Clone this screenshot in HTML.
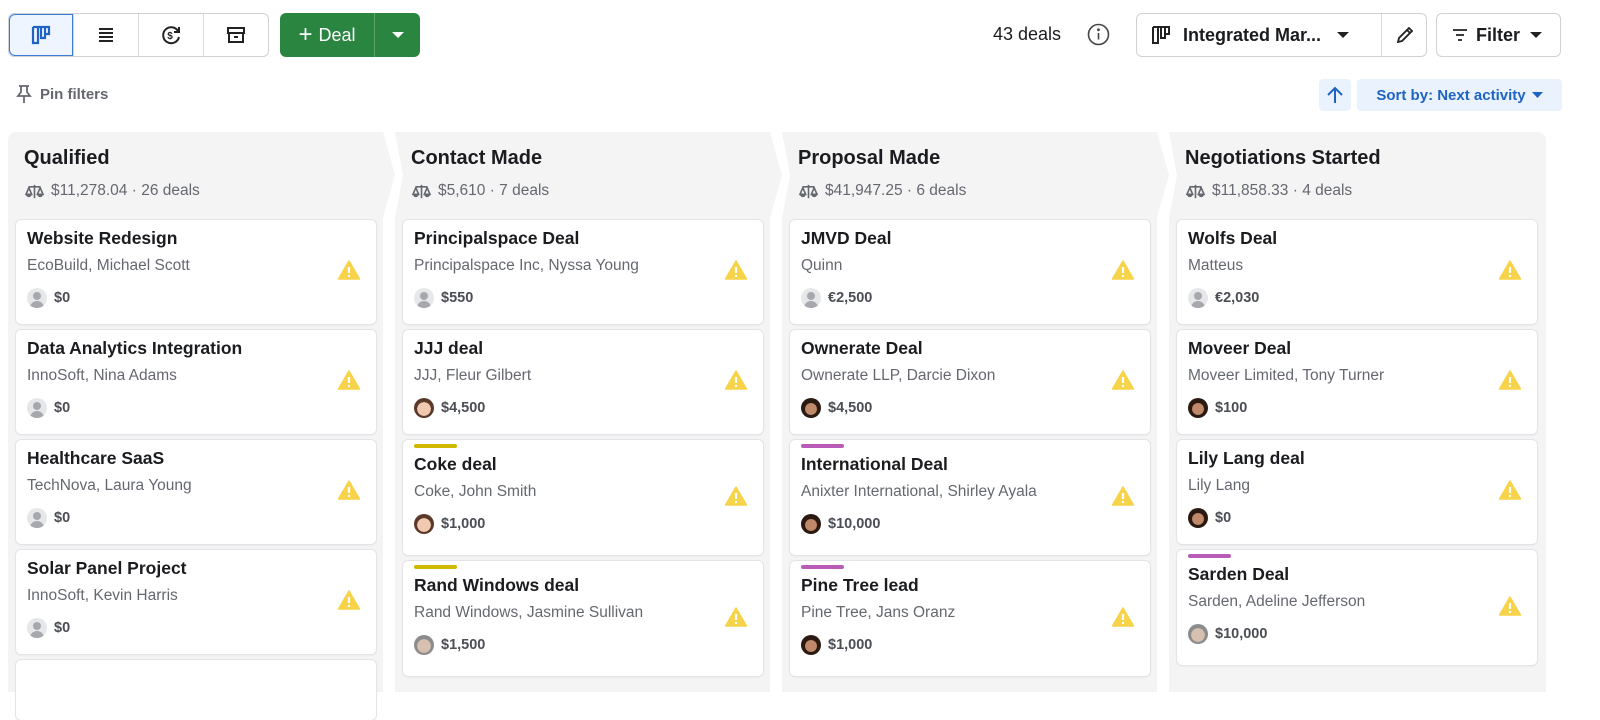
<!DOCTYPE html>
<html><head><meta charset="utf-8">
<style>
*{box-sizing:border-box;margin:0;padding:0}
body{width:1600px;height:675px;overflow:hidden;background:#fff;font-family:"Liberation Sans",Arial,sans-serif;color:#1b1c1f;position:relative}
.abs{position:absolute}
.seg{position:absolute;top:13px;left:8px;width:261px;height:44px;border:1px solid #cfd1d5;border-radius:6px;display:flex;overflow:hidden}
.seg div{flex:1;border-left:1px solid #d9dbde;display:flex;align-items:center;justify-content:center}
.seg div:first-child{border-left:none;background:#eef5fe;box-shadow:inset 0 0 0 1px #3b7bd4;border-radius:6px 0 0 6px}
.deal{position:absolute;left:280px;top:13px;width:140px;height:44px;background:#2a8541;border-radius:6px;color:#fff;display:flex}
.deal .m{width:95px;display:flex;align-items:center;justify-content:center;font-size:18px;gap:6px;border-right:1px solid #5ea670}
.deal .d{flex:1;display:flex;align-items:center;justify-content:center}
.btn{position:absolute;top:13px;height:44px;border:1px solid #cfd1d5;border-radius:6px;display:flex;align-items:center;font-size:18px;font-weight:600;white-space:nowrap}
.col{position:absolute;top:132px;height:560px;background:#f4f4f5}
.wrap{position:absolute;top:0;width:387px;height:675px}
.ch{position:absolute;left:16px;top:147px;font-size:20px;font-weight:600;color:#1b1c1f;white-space:nowrap}
.cs{position:absolute;left:16px;top:182px;font-size:15.5px;color:#65686f;display:flex;align-items:center;gap:6px;white-space:nowrap}
.card{position:absolute;left:8px;width:360px;background:#fff;border-radius:5px;box-shadow:0 0 0 1px #e3e4e7,0 1px 2px rgba(0,0,0,.08)}
.card .t{position:absolute;left:11px;font-size:17.5px;font-weight:600;color:#1b1c1f;white-space:nowrap}
.card .s{position:absolute;left:11px;font-size:15.5px;color:#65686f;white-space:nowrap}
.card .v{position:absolute;left:11px;font-size:14.5px;font-weight:600;color:#4b4e55;display:flex;align-items:center;gap:7px}
.card .w{position:absolute;left:322px}
.bar{position:absolute;left:11px;top:4px;width:43px;height:4px;border-radius:2px}
.av{width:20px;height:20px;border-radius:50%;display:inline-block;position:relative;overflow:hidden}
.av.g{background:#e6e7e9}
.av.g:before{content:"";position:absolute;left:6px;top:4px;width:8px;height:8px;border-radius:50%;background:#a6a8ad}
.av.g:after{content:"";position:absolute;left:3px;top:13px;width:14px;height:10px;border-radius:7px 7px 0 0;background:#a6a8ad}
.av.p1{background:radial-gradient(circle at 50% 55%,#f0c9b0 0 45%,#5a3a2a 47%)}
.av.p2{background:radial-gradient(circle at 50% 55%,#c08a6a 0 38%,#2b1a12 42%)}
.av.p3{background:radial-gradient(circle at 50% 55%,#d7c0b0 0 45%,#8c8c8c 47%)}
</style></head><body>

<div class="seg">
 <div><svg width="22" height="22" viewBox="0 0 22 22" fill="none" stroke="#1f63c4" stroke-width="2.2"><path d="M3 3h16v7h-4V3M8 3v16h-5V3M15 10v4h-4V3"/></svg></div>
 <div><svg width="20" height="20" viewBox="0 0 20 20" stroke="#222" stroke-width="2"><path d="M3 4h14M3 8h14M3 12h14M3 16h14"/></svg></div>
 <div><svg width="22" height="22" viewBox="0 0 22 22" fill="none" stroke="#222" stroke-width="2"><path d="M18 7A8 8 0 1 0 19 13"/><path d="M19 3v5h-5"/><text x="7.2" y="15" font-size="10" font-weight="700" fill="#222" stroke="none" font-family="Liberation Sans">$</text></svg></div>
 <div><svg width="22" height="22" viewBox="0 0 22 22" fill="none" stroke="#222" stroke-width="2"><rect x="3" y="4" width="16" height="5"/><path d="M4 9v9h14V9M9 13h4"/></svg></div>
</div>
<div class="deal"><div class="m"><span style="font-size:24px;line-height:1">+</span>Deal</div><div class="d"><svg width="12" height="8"><path d="M0 1h12L6 7z" fill="#fff"/></svg></div></div>

<div class="abs" style="left:16px;top:84px;display:flex;align-items:center;gap:8px;font-size:15px;font-weight:600;color:#65686f">
<svg width="16" height="20" viewBox="0 0 16 20" fill="none" stroke="#65686f" stroke-width="1.8"><path d="M3 2h10M5 2v6l-3 4h12l-3-4V2M8 12v7"/></svg>Pin filters</div>

<div class="abs" style="left:993px;top:24px;font-size:18px;color:#1b1c1f">43 deals</div>
<svg class="abs" style="left:1087px;top:23px" width="23" height="23" viewBox="0 0 23 23" fill="none" stroke="#444" stroke-width="1.6"><circle cx="11.5" cy="11.5" r="10"/><path d="M11.5 10v6.5"/><circle cx="11.5" cy="6.8" r=".6" fill="#444"/></svg>

<div class="btn" style="left:1136px;width:291px">
 <svg style="margin-left:13px" width="22" height="22" viewBox="0 0 22 22" fill="none" stroke="#222" stroke-width="2"><path d="M3 3h16v7h-4V3M8 3v16h-5V3M15 10v4h-4V3"/></svg>
 <span style="margin-left:11px">Integrated Mar...</span>
 <svg style="margin-left:16px" width="12" height="8"><path d="M0 1h12L6 7z" fill="#222"/></svg>
 <div style="position:absolute;left:244px;top:0;bottom:0;border-left:1px solid #d9dbde;width:46px;display:flex;align-items:center;justify-content:center">
 <svg width="20" height="20" viewBox="0 0 20 20" fill="none" stroke="#222" stroke-width="1.8"><path d="M3 17l1-4L14 3l3 3L7 16z M12 5l3 3"/></svg></div>
</div>
<div class="btn" style="left:1436px;width:125px">
 <svg style="margin-left:15px" width="16" height="14" viewBox="0 0 16 14" stroke="#222" stroke-width="1.8"><path d="M1 2h14M4 7h8M6 12h4"/></svg>
 <span style="margin-left:8px">Filter</span>
 <svg style="margin-left:10px" width="12" height="8"><path d="M0 1h12L6 7z" fill="#222"/></svg>
</div>

<div class="abs" style="left:1319px;top:79px;width:32px;height:32px;background:#eaf3fd;border-radius:4px;display:flex;align-items:center;justify-content:center">
<svg width="18" height="20" viewBox="0 0 18 20" fill="none" stroke="#1f63c4" stroke-width="2"><path d="M9 18V3M2 10l7-7 7 7"/></svg></div>
<div class="abs" style="left:1357px;top:79px;width:205px;height:32px;background:#eaf3fd;border-radius:4px;display:flex;align-items:center;justify-content:center;gap:6px;font-size:15px;font-weight:600;color:#1f63c4;white-space:nowrap">Sort by: Next activity <svg width="11" height="7"><path d="M0 0h11L5.5 6z" fill="#1f63c4"/></svg></div>

<div class="col" style="left:8px;width:387px;clip-path:polygon(0 0,375px 0,387px 43px,375px 86px,375px 100%,0 100%);border-radius:8px 0 0 0"></div>
<div class="col" style="left:395px;width:387px;clip-path:polygon(0 0,375px 0,387px 43px,375px 86px,375px 100%,0 100%,0 86px,8px 43px,0 0)"></div>
<div class="col" style="left:782px;width:387px;clip-path:polygon(0 0,375px 0,387px 43px,375px 86px,375px 100%,0 100%,0 86px,8px 43px,0 0)"></div>
<div class="col" style="left:1169px;width:377px;border-radius:0 8px 0 0;clip-path:polygon(0 0,377px 0,377px 100%,0 100%,0 86px,8px 43px,0 0)"></div>

<svg width="0" height="0" style="position:absolute"><defs>
<symbol id="sc" viewBox="0 0 22 18"><g fill="none" stroke="#65686f" stroke-width="1.7"><path d="M11 2v14M5 4h12M2 12l3-7 3 7zM14 12l3-7 3 7z"/></g><path d="M2 12h6a3 3 0 0 1-6 0zM14 12h6a3 3 0 0 1-6 0z" fill="#65686f"/></symbol>
<symbol id="wn" viewBox="0 0 22 20"><path d="M11 1L21.5 19H.5z" fill="#f7d34a" stroke="#f7d34a" stroke-linejoin="round" stroke-width="1.5"/><path d="M11 7v6" stroke="#fff" stroke-width="2.2"/><circle cx="11" cy="16" r="1.2" fill="#fff"/></symbol>
</defs></svg>

<div id="board"></div>
<script>
const cols=[
["Qualified","$11,278.04 · 26 deals",[
 ["Website Redesign","EcoBuild, Michael Scott","g","$0"],
 ["Data Analytics Integration","InnoSoft, Nina Adams","g","$0"],
 ["Healthcare SaaS","TechNova, Laura Young","g","$0"],
 ["Solar Panel Project","InnoSoft, Kevin Harris","g","$0"],
 ["","","g",""]]],
["Contact Made","$5,610 · 7 deals",[
 ["Principalspace Deal","Principalspace Inc, Nyssa Young","g","$550"],
 ["JJJ deal","JJJ, Fleur Gilbert","p1","$4,500"],
 ["Coke deal","Coke, John Smith","p1","$1,000","#d1b900"],
 ["Rand Windows deal","Rand Windows, Jasmine Sullivan","p3","$1,500","#d1b900"]]],
["Proposal Made","$41,947.25 · 6 deals",[
 ["JMVD Deal","Quinn","g","€2,500"],
 ["Ownerate Deal","Ownerate LLP, Darcie Dixon","p2","$4,500"],
 ["International Deal","Anixter International, Shirley Ayala","p2","$10,000","#b95cb8"],
 ["Pine Tree lead","Pine Tree, Jans Oranz","p2","$1,000","#b95cb8"]]],
["Negotiations Started","$11,858.33 · 4 deals",[
 ["Wolfs Deal","Matteus","g","€2,030"],
 ["Moveer Deal","Moveer Limited, Tony Turner","p2","$100"],
 ["Lily Lang deal","Lily Lang","p2","$0"],
 ["Sarden Deal","Sarden, Adeline Jefferson","p3","$10,000","#b95cb8"]]]];
let h="";
cols.forEach((c,i)=>{
 const L=8+387*i;
 h+=`<div class="wrap" style="left:${L}px">`;
 h+=`<div class="ch">${c[0]}</div><div class="cs"><svg width="21" height="17"><use href="#sc"/></svg>${c[1]}</div>`;
 let y=224;
 c[2].forEach(d=>{
  const b=d[4];const H=b?115:104;const o=b?6:0;
  if(!d[0]){h+=`<div class="card" style="top:${y-4}px;height:60px"></div>`;return;}
  h+=`<div class="card" style="top:${y-4}px;height:${H}px">`;
  if(b)h+=`<div class="bar" style="background:${b}"></div>`;
  h+=`<div class="t" style="top:${6+o+2}px">${d[0]}</div>`;
  h+=`<div class="s" style="top:${35+o+2}px">${d[1]}</div>`;
  h+=`<div class="v" style="top:${66+o+2}px"><span class="av ${d[2]}"></span>${d[3]}</div>`;
  h+=`<svg class="w" style="top:${40+o}px" width="22" height="20"><use href="#wn"/></svg></div>`;
  y+=H+6;
 });
 h+=`</div>`;
});
document.getElementById("board").innerHTML=h;
</script>
</body></html>
